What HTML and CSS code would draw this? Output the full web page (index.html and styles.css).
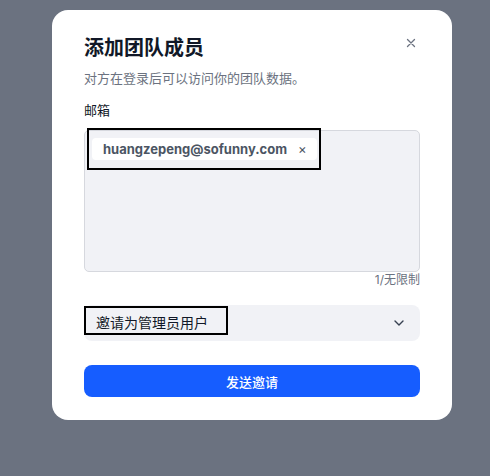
FILE: index.html
```html
<!DOCTYPE html>
<html lang="zh">
<head>
<meta charset="utf-8">
<link rel="stylesheet" href="styles.css">
</head>
<body>
<div class="modal">
  <div class="head">
    <h1 class="title">添加团队成员</h1>
    <svg class="close" width="10" height="10" viewBox="0 0 10 10"><path d="M1.5 1.5L8.5 8.5M8.5 1.5L1.5 8.5" stroke="#6b7280" stroke-width="1.3" stroke-linecap="round"/></svg>
  </div>
  <p class="sub">对方在登录后可以访问你的团队数据。</p>
  <div class="label">邮箱</div>
  <div class="area">
    <div class="hl chipwrap">
      <span class="chip"><span class="chip-text">huangzepeng@sofunny.com</span><span class="chip-x">×</span></span>
    </div>
  </div>
  <div class="count">1/无限制</div>
  <div class="select">
    <div class="hl seltext">邀请为管理员用户</div>
    <svg class="chev" width="10" height="6" viewBox="0 0 10 6"><path d="M1 1L5 5L9 1" fill="none" stroke="#374151" stroke-width="1.4" stroke-linecap="round" stroke-linejoin="round"/></svg>
  </div>
  <button class="btn">发送邀请</button>
</div>
</body>
</html>
```
FILE: styles.css
```css
* { box-sizing: border-box; }
html, body { margin: 0; padding: 0; }
body {
  background: #6b7280;
  width: 490px;
  height: 476px;
  font-family: "Inter", "Noto Sans CJK SC", sans-serif;
  overflow: hidden;
}
.modal {
  margin: 10px 0 0 52px;
  width: 400px;
  height: 410px;
  background: #fff;
  border-radius: 16px;
  padding: 24px 32px 23px;
  display: flex;
  flex-direction: column;
}
.head {
  display: flex;
  justify-content: space-between;
  align-items: flex-start;
}
.title {
  margin: 0;
  font-size: 20px;
  line-height: 28px;
  font-weight: 700;
  color: #111827;
}
.close { margin-top: 4px; margin-right: 4px; }
.sub {
  margin: 6px 0 0;
  font-size: 13px;
  line-height: 20px;
  color: #6b7280;
}
.label {
  margin-top: 12px;
  font-size: 13px;
  line-height: 20px;
  color: #111827;
}
.area {
  margin-top: 10px;
  height: 143px;
  background: #f1f2f6;
  border: 1px solid #d6d8de;
  border-radius: 5px;
}
.hl { border: 2px solid #000; }
.chipwrap {
  display: inline-flex;
  margin: -3px 0 0 2px;
  padding: 8px 2px 8px 3px;
}
.chip {
  display: inline-flex;
  align-items: center;
  height: 22px;
  background: #fff;
  border-radius: 4px;
  padding: 0 10px 0 11px;
  gap: 11px;
}
.chip-text {
  font-size: 13px;
  font-weight: 700;
  color: #4b5563;
}
.chip-x {
  font-size: 13px;
  color: #4b5563;
}
.count {
  text-align: right;
  font-size: 12px;
  line-height: 16px;
  color: #6b7280;
}
.select {
  margin-top: 17px;
  height: 36px;
  background: #f1f2f6;
  border-radius: 8px;
  display: flex;
  align-items: flex-start;
  justify-content: space-between;
  padding-right: 16px;
}
.seltext {
  margin-top: 1px;
  width: 144px;
  height: 29px;
  padding-left: 10px;
  font-size: 14px;
  line-height: 29px;
  color: #111827;
}
.chev { margin-top: 15px; }
.btn {
  margin-top: 24px;
  height: 32px;
  border: 0;
  border-radius: 8px;
  background: #165dff;
  color: #fff;
  font-family: inherit;
  font-size: 13px;
  font-weight: 500;
}
```
